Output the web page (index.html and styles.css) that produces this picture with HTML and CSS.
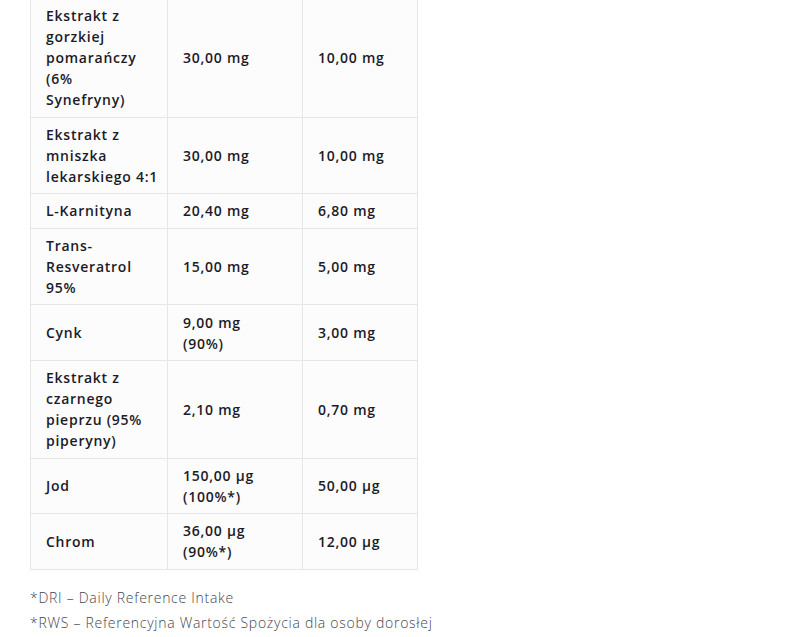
FILE: index.html
```html
<!DOCTYPE html>
<html lang="pl">
<head>
<meta charset="utf-8">
<link rel="stylesheet" href="styles.css">
</head>
<body>
<div class="page">
  <table class="nutri">
    <colgroup><col class="c1"><col class="c2"><col class="c3"></colgroup>
    <tbody>
      <tr><td>Ekstrakt z gorzkiej pomarańczy (6%<br>Synefryny)</td><td>30,00 mg</td><td>10,00 mg</td></tr>
      <tr><td>Ekstrakt z mniszka lekarskiego 4:1</td><td>30,00 mg</td><td>10,00 mg</td></tr>
      <tr><td>L-Karnityna</td><td>20,40 mg</td><td>6,80 mg</td></tr>
      <tr><td>Trans-Resveratrol 95%</td><td>15,00 mg</td><td>5,00 mg</td></tr>
      <tr><td>Cynk</td><td>9,00 mg (90%)</td><td>3,00 mg</td></tr>
      <tr><td>Ekstrakt z czarnego pieprzu (95% piperyny)</td><td>2,10 mg</td><td>0,70 mg</td></tr>
      <tr><td>Jod</td><td>150,00 µg (100%*)</td><td>50,00 µg</td></tr>
      <tr><td>Chrom</td><td>36,00 µg (90%*)</td><td>12,00 µg</td></tr>
    </tbody>
  </table>
  <div class="notes">
    <p>*DRI – Daily Reference Intake</p>
    <p>*RWS – Referencyjna Wartość Spożycia dla osoby dorosłej</p>
  </div>
</div>
</body>
</html>
```
FILE: styles.css
```css
html, body {
  margin: 0;
  padding: 0;
  background: #ffffff;
}
body {
  font-family: "Open Sans", "Noto Sans", sans-serif;
  color: #1b1b28;
}
.page {
  padding: 0 0 0 30px;
  margin-top: -2px;
}
.nutri {
  border-collapse: collapse;
  table-layout: fixed;
  width: 387px;
  background: #fcfcfc;
}
.c1 { width: 137px; }
.c2 { width: 135px; }
.c3 { width: 115px; }
.nutri td {
  border: 1px solid #e6e6e6;
  padding: 6.3px 14px 6.3px 15px;
  font-size: 14px;
  font-weight: 600;
  line-height: 21px;
  vertical-align: middle;
  letter-spacing: 0.75px;
}
.nutri td:first-child {
  padding-right: 5px;
}
.nutri td:nth-child(2) {
  padding-right: 26px;
}
.notes {
  margin-top: 15px;
  font-size: 14px;
  font-weight: 300;
  color: #45454f;
  letter-spacing: 0.72px;
}
.notes p {
  margin: 0;
  line-height: 25px;
}
```
